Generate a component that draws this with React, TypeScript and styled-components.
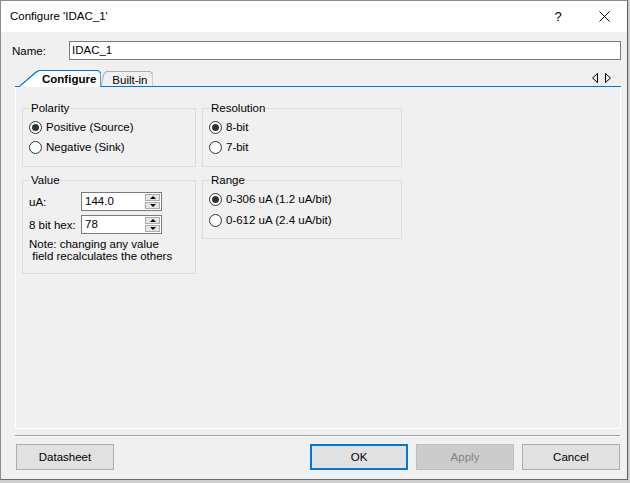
import styled, { createGlobalStyle } from "styled-components";

const GlobalStyle = createGlobalStyle`
  html, body {
    margin: 0;
    padding: 0;
    background: #cfcfcf;
  }
  body {
    font-family: "Liberation Sans", Arial, sans-serif;
    font-size: 11.5px;
    color: #000;
  }
  * { box-sizing: border-box; }
`;

const Window = styled.div`
  width: 628px;
  height: 480px;
  border: 1px solid #8c8c8c;
  border-right-color: #5a5a5a;
  border-bottom-color: #6a6a6a;
  background: #f0f0f0;
  display: flex;
  flex-direction: column;
`;

const TitleBar = styled.div`
  height: 31px;
  background: #fff;
  display: flex;
  align-items: center;
  padding-left: 9px;
  flex-shrink: 0;
`;

const Title = styled.span`
  flex: 1;
  font-size: 11.5px;
  padding-bottom: 1px;
`;

const TitleButton = styled.div`
  width: 46px;
  height: 31px;
  display: flex;
  align-items: center;
  justify-content: center;
  font-size: 13px;
`;

const NameRow = styled.div`
  display: flex;
  align-items: center;
  padding: 9px 6px 0 11px;
`;

const NameLabel = styled.span`
  width: 57px;
`;

const TextField = styled.div`
  flex: 1;
  height: 19px;
  border: 1px solid #7a7a7a;
  background: #fff;
  padding: 1px 0 0 2px;
  line-height: 15px;
`;

const TabArea = styled.div`
  margin: 11px 6px 0 14px;
  display: flex;
  flex-direction: column;
`;

const TabStrip = styled.div`
  height: 16px;
  display: flex;
  align-items: flex-end;
  border-bottom: 1px solid #0078d7;
  padding-left: 3px;
`;

const Tab = styled.div<{ $active?: boolean }>`
  position: relative;
  height: ${(p) => (p.$active ? 17 : 16)}px;
  margin-bottom: -1px;
  display: flex;
  align-items: center;
  font-weight: ${(p) => (p.$active ? 700 : 400)};
  padding: ${(p) => (p.$active ? "1px 5px 0 24px" : "1px 6px 0 12px")};
  margin-left: ${(p) => (p.$active ? 0 : -1)}px;
  background: ${(p) => (p.$active ? "#0078d7" : "#adadad")};
  clip-path: ${(p) =>
    p.$active
      ? "polygon(0 100%, 17px 2px, 21px 0, calc(100% - 3px) 0, 100% 3px, 100% 100%)"
      : "polygon(0 100%, 3px 3px, 6px 0, calc(100% - 3px) 0, 100% 3px, 100% 100%)"};
  z-index: ${(p) => (p.$active ? 2 : 1)};
  &::before {
    content: "";
    position: absolute;
    inset: 0;
    background: ${(p) => (p.$active ? "#fff" : "#f0f0f0")};
    clip-path: ${(p) =>
      p.$active
        ? "polygon(1.7px 100%, 18px 3px, 21.5px 1px, calc(100% - 3.4px) 1px, calc(100% - 1px) 3.4px, calc(100% - 1px) 100%)"
        : "polygon(1px calc(100% - 1px), 4px 3.5px, 6.5px 1px, calc(100% - 3.4px) 1px, calc(100% - 1px) 3.4px, calc(100% - 1px) calc(100% - 1px))"};
    z-index: -1;
  }
  ${(p) =>
    !p.$active &&
    `&::after {
      content: "";
      position: absolute;
      left: 0;
      right: 0;
      bottom: 0;
      height: 1px;
      background: #0078d7;
    }`}
`;

const TabArrows = styled.div`
  margin-left: auto;
  display: flex;
  gap: 7px;
  align-self: center;
  padding-right: 10px;
  margin-top: -1px;
`;

const Panel = styled.div`
  height: 342px;
  border: 1px solid #fff;
  border-top: none;
  padding: 14px 6px 0 6px;
  display: flex;
  gap: 6px;
  align-items: flex-start;
`;

const Column = styled.div<{ $width: number }>`
  width: ${(p) => p.$width}px;
  display: flex;
  flex-direction: column;
  gap: 6px;
`;

const Group = styled.fieldset<{ $height: number }>`
  margin: 0;
  padding: 0 6px;
  height: ${(p) => p.$height}px;
  border: 1px solid #dcdcdc;
  min-width: 0;
`;

const Legend = styled.legend`
  padding: 0 1px;
  margin-left: 1px;
  line-height: 14px;
`;

const RadioList = styled.div<{ $gap: number }>`
  display: flex;
  flex-direction: column;
  padding-top: 2px;
  gap: ${(p) => p.$gap}px;
`;

const RadioRow = styled.label`
  display: flex;
  align-items: center;
  height: 20px;
  gap: 4px;
`;

const RadioCircle = styled.span<{ $checked?: boolean }>`
  width: 13px;
  height: 13px;
  border-radius: 50%;
  border: 1px solid #333;
  background: #fff;
  display: flex;
  align-items: center;
  justify-content: center;
  &::after {
    content: "";
    width: 7px;
    height: 7px;
    border-radius: 50%;
    background: ${(p) => (p.$checked ? "#333" : "transparent")};
  }
`;

const FieldRow = styled.div`
  display: flex;
  align-items: center;
  height: 19px;
`;

const FieldLabel = styled.span`
  width: 52px;
`;

const SpinBox = styled.div`
  width: 81px;
  height: 19px;
  border: 1px solid #7a7a7a;
  background: #fff;
  display: flex;
  align-items: stretch;
  padding: 1px;
`;

const SpinText = styled.span`
  flex: 1;
  padding-left: 2px;
  line-height: 15px;
`;

const Spinner = styled.div`
  width: 15px;
  display: flex;
  flex-direction: column;
  gap: 1px;
`;

const SpinHalf = styled.div<{ $down?: boolean }>`
  flex: 1;
  background: #e6e6e6;
  border: 1px solid #acacac;
  display: flex;
  align-items: center;
  justify-content: center;
  &::after {
    content: "";
    width: 0;
    height: 0;
    border-left: 3px solid transparent;
    border-right: 3px solid transparent;
    ${(p) =>
      p.$down ? "border-top: 3px solid #000;" : "border-bottom: 3px solid #000;"}
  }
`;

const ValueFields = styled.div`
  display: flex;
  flex-direction: column;
  gap: 4px;
  padding: 5px 0 0 0;
`;

const Note = styled.div`
  margin-top: 4px;
  line-height: 12px;
  white-space: pre;
`;

const Separator = styled.div`
  margin: 6px 7px 0 14px;
  height: 2px;
  border-top: 1px solid #a0a0a0;
  border-bottom: 1px solid #fff;
`;

const ButtonRow = styled.div`
  display: flex;
  margin: 7px 7px 0 15px;
  gap: 8px;
`;

const Button = styled.div<{ $variant?: "default" | "disabled" }>`
  width: 98px;
  height: 26px;
  display: flex;
  align-items: center;
  justify-content: center;
  background: ${(p) => (p.$variant === "disabled" ? "#cccccc" : "#e1e1e1")};
  color: ${(p) => (p.$variant === "disabled" ? "#838383" : "#000")};
  border: ${(p) =>
    p.$variant === "default"
      ? "2px solid #0078d7"
      : p.$variant === "disabled"
      ? "1px solid #bfbfbf"
      : "1px solid #adadad"};
`;

const Spacer = styled.div`
  flex: 1;
`;

function Radio({ label, checked }: { label: string; checked?: boolean }) {
  return (
    <RadioRow>
      <RadioCircle $checked={checked} />
      <span>{label}</span>
    </RadioRow>
  );
}

function Spin({ value }: { value: string }) {
  return (
    <SpinBox>
      <SpinText>{value}</SpinText>
      <Spinner>
        <SpinHalf />
        <SpinHalf $down />
      </Spinner>
    </SpinBox>
  );
}

export default function App() {
  return (
    <>
      <GlobalStyle />
      <Window>
        <TitleBar>
          <Title>Configure 'IDAC_1'</Title>
          <TitleButton>?</TitleButton>
          <TitleButton>
            <svg width="11" height="11" viewBox="0 0 11 11">
              <path d="M0.5 0.5 L10.5 10.5 M10.5 0.5 L0.5 10.5" stroke="#000" strokeWidth="1" />
            </svg>
          </TitleButton>
        </TitleBar>

        <NameRow>
          <NameLabel>Name:</NameLabel>
          <TextField>IDAC_1</TextField>
        </NameRow>

        <TabArea>
          <TabStrip>
            <Tab $active>Configure</Tab>
            <Tab>Built-in</Tab>
            <TabArrows>
              <svg width="6" height="10" viewBox="0 0 6 10">
                <path d="M5.5 0.5 L0.5 5 L5.5 9.5 Z" fill="none" stroke="#000" />
              </svg>
              <svg width="6" height="10" viewBox="0 0 6 10">
                <path d="M0.5 0.5 L5.5 5 L0.5 9.5 Z" fill="none" stroke="#000" />
              </svg>
            </TabArrows>
          </TabStrip>
          <Panel>
            <Column $width={174}>
              <Group $height={66}>
                <Legend>Polarity</Legend>
                <RadioList $gap={0}>
                  <Radio label="Positive (Source)" checked />
                  <Radio label="Negative (Sink)" />
                </RadioList>
              </Group>
              <Group $height={101}>
                <Legend>Value</Legend>
                <ValueFields>
                  <FieldRow>
                    <FieldLabel>uA:</FieldLabel>
                    <Spin value="144.0" />
                  </FieldRow>
                  <FieldRow>
                    <FieldLabel>8 bit hex:</FieldLabel>
                    <Spin value="78" />
                  </FieldRow>
                </ValueFields>
                <Note>{"Note: changing any value\n field recalculates the others"}</Note>
              </Group>
            </Column>
            <Column $width={200}>
              <Group $height={66}>
                <Legend>Resolution</Legend>
                <RadioList $gap={0}>
                  <Radio label="8-bit" checked />
                  <Radio label="7-bit" />
                </RadioList>
              </Group>
              <Group $height={66}>
                <Legend>Range</Legend>
                <RadioList $gap={1}>
                  <Radio label="0-306 uA (1.2 uA/bit)" checked />
                  <Radio label="0-612 uA (2.4 uA/bit)" />
                </RadioList>
              </Group>
            </Column>
          </Panel>
        </TabArea>

        <Separator />
        <ButtonRow>
          <Button>Datasheet</Button>
          <Spacer />
          <Button $variant="default">OK</Button>
          <Button $variant="disabled">Apply</Button>
          <Button>Cancel</Button>
        </ButtonRow>
      </Window>
    </>
  );
}
